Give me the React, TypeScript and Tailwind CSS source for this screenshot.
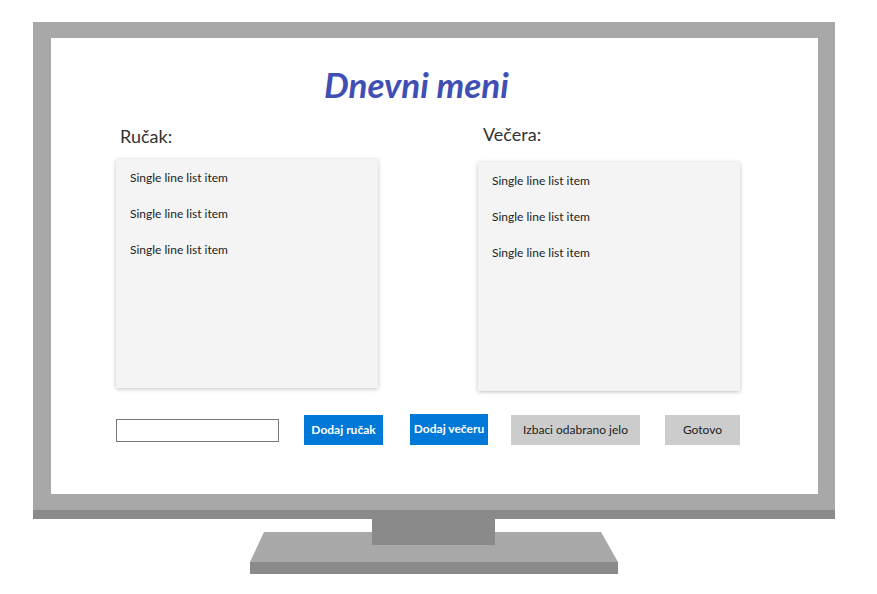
import React from 'react';

const items = ['Single line list item', 'Single line list item', 'Single line list item'];

const ListBox: React.FC<{ className?: string }> = ({ className }) => (
  <div className={`w-[262px] h-[229px] bg-[#f4f4f4] shadow-[0_1px_4px_rgba(0,0,0,0.25)] pt-[11px] pl-[14px] ${className ?? ''}`}>
    {items.map((t, i) => (
      <div key={i} className="h-[36px] text-[12px] leading-[16px] text-[#222]">
        {t}
      </div>
    ))}
  </div>
);

const Stand: React.FC = () => (
  <svg width="802" height="55" viewBox="0 0 802 55" className="block">
    <polygon points="231,13 568,13 585,43 217,43" fill="#a8a8a8" />
    <rect x="217" y="43" width="368" height="12" fill="#8a8a8a" />
    <rect x="339" y="0" width="123" height="26" fill="#8a8a8a" />
  </svg>
);

export default function App() {
  return (
    <div className="w-[877px] h-[594px] bg-white overflow-hidden font-['Lato',sans-serif]">
      <div className="ml-[33px] pt-[22px] w-[802px]">
        {/* monitor frame */}
        <div className="bg-[#a8a8a8] pt-[16px] pl-[18px] pr-[17px] pb-[16px]">
          <div className="h-[456px] bg-white flex flex-col">
            <h1 className="mt-[28px] ml-[273px] text-[35px] leading-[36px] font-bold italic text-[#3f4fb4]">
              Dnevni meni
            </h1>

            <div className="flex mt-[22px] pl-[65px] gap-[100px]">
              <div className="flex flex-col">
                <div className="ml-[4px] text-[18px] leading-[24px] text-[#333] mb-[11px]">Ručak:</div>
                <ListBox />
              </div>
              <div className="flex flex-col">
                <div className="ml-[5px] -mt-[2px] text-[18px] leading-[24px] text-[#333] mb-[16px]">Večera:</div>
                <ListBox className="h-[228px]" />
              </div>
            </div>

            <div className="flex items-center mt-[23px] pl-[65px] h-[31px]">
              <input className="w-[163px] h-[23px] mt-[2px] border border-[#777] bg-white outline-none" />
              <button className="ml-[25px] w-[79px] h-[30px] bg-[#0078d7] text-white text-[12px] font-bold">
                Dodaj ručak
              </button>
              <button className="ml-[27px] w-[78px] h-[31px] -mt-[1px] bg-[#0078d7] text-white text-[12px] font-bold">
                Dodaj večeru
              </button>
              <button className="ml-[23px] w-[129px] h-[30px] bg-[#cccccc] text-[#222] text-[12px]">
                Izbaci odabrano jelo
              </button>
              <button className="ml-[25px] w-[75px] h-[30px] bg-[#cccccc] text-[#222] text-[12px]">
                Gotovo
              </button>
            </div>
          </div>
        </div>
        <div className="h-[9px] bg-[#8a8a8a]" />
        <Stand />
      </div>
    </div>
  );
}
